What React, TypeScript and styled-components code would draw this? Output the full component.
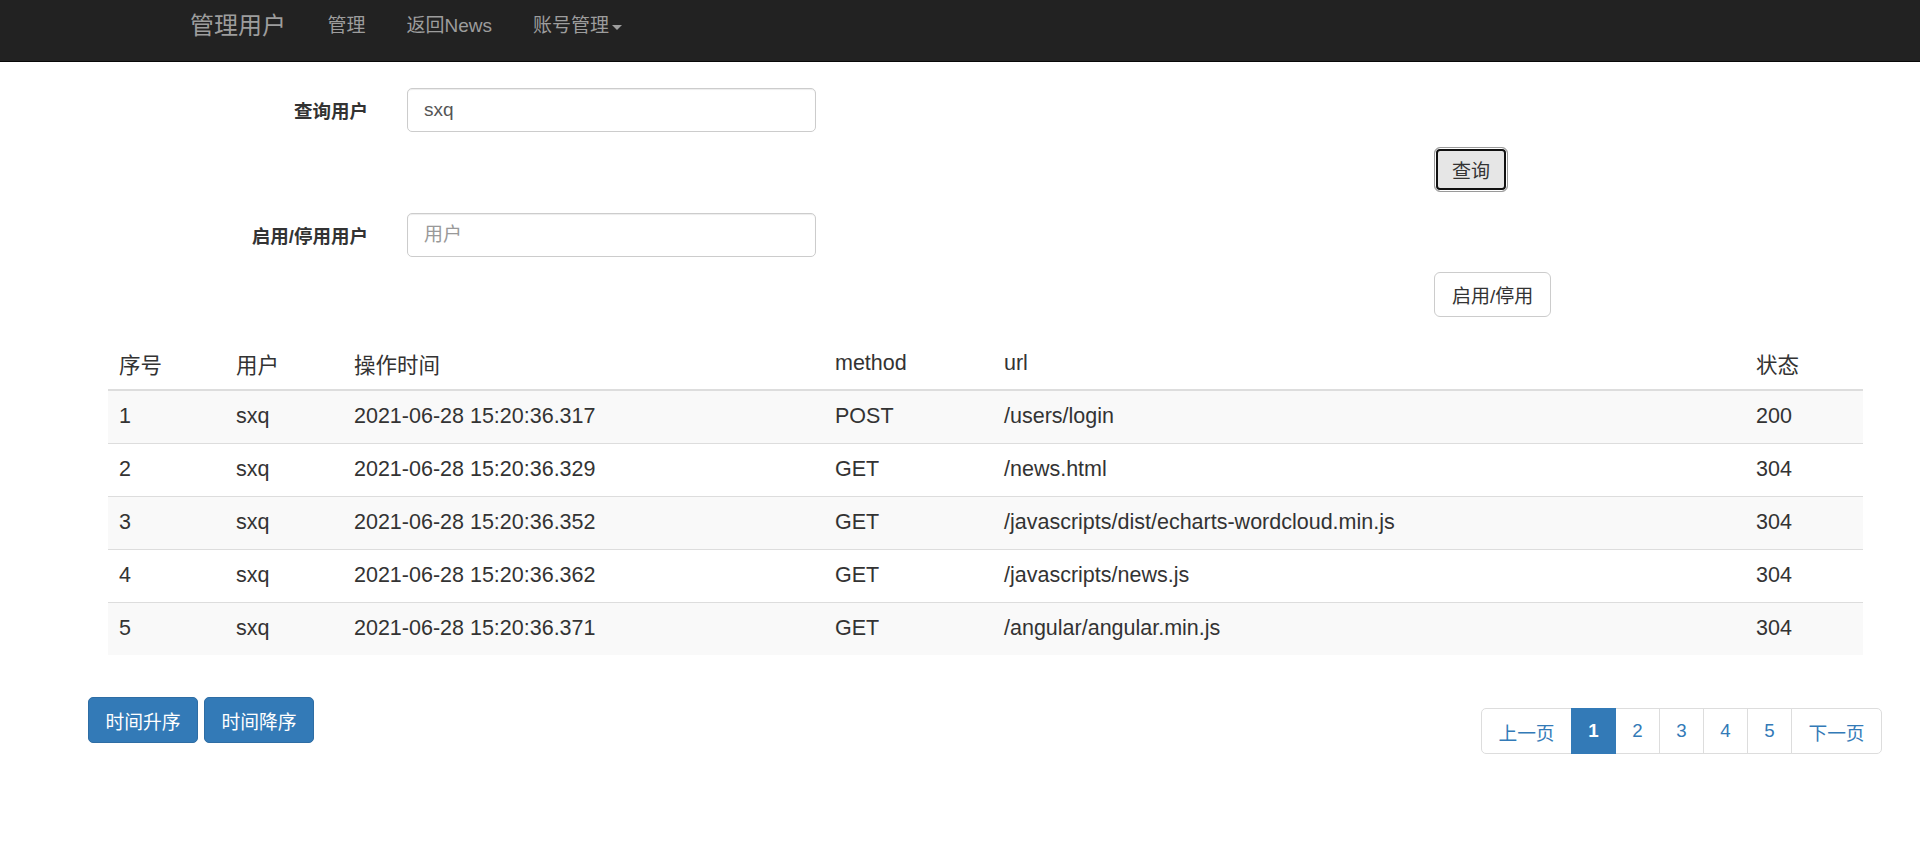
import { ReactElement } from 'react'
import styled, { createGlobalStyle } from 'styled-components'

type LogRow = {
  id: number
  user: string
  time: string
  method: string
  url: string
  status: number
}

const logs: LogRow[] = [
  { id: 1, user: 'sxq', time: '2021-06-28 15:20:36.317', method: 'POST', url: '/users/login', status: 200 },
  { id: 2, user: 'sxq', time: '2021-06-28 15:20:36.329', method: 'GET', url: '/news.html', status: 304 },
  { id: 3, user: 'sxq', time: '2021-06-28 15:20:36.352', method: 'GET', url: '/javascripts/dist/echarts-wordcloud.min.js', status: 304 },
  { id: 4, user: 'sxq', time: '2021-06-28 15:20:36.362', method: 'GET', url: '/javascripts/news.js', status: 304 },
  { id: 5, user: 'sxq', time: '2021-06-28 15:20:36.371', method: 'GET', url: '/angular/angular.min.js', status: 304 },
]

const columnWidths = [117, 118, 481, 169, 752, 118]
const headers = ['序号', '用户', '操作时间', 'method', 'url', '状态']
const pages = ['1', '2', '3', '4', '5']

function App(): ReactElement {
  return (
    <>
      <GlobalStyle />
      <Navbar>
        <Brand>管理用户</Brand>
        <NavLink>管理</NavLink>
        <NavLink>返回News</NavLink>
        <NavLink>
          账号管理
          <Caret />
        </NavLink>
      </Navbar>

      <FormSection>
        <FormRow>
          <Label>查询用户</Label>
          <TextInput defaultValue="sxq" />
        </FormRow>
        <ButtonRow>
          <DefaultButton $focused>查询</DefaultButton>
        </ButtonRow>
        <FormRow>
          <Label>启用/停用用户</Label>
          <TextInput placeholder="用户" />
        </FormRow>
        <ButtonRow>
          <DefaultButton>启用/停用</DefaultButton>
        </ButtonRow>
      </FormSection>

      <TableWrap>
        <Table>
          <colgroup>
            {columnWidths.map((w, i) => (
              <col key={i} style={{ width: w }} />
            ))}
          </colgroup>
          <thead>
            <tr>
              {headers.map((h) => (
                <Th key={h}>{h}</Th>
              ))}
            </tr>
          </thead>
          <tbody>
            {logs.map((row) => (
              <Tr key={row.id} $striped={row.id % 2 === 1}>
                <Td>{row.id}</Td>
                <Td>{row.user}</Td>
                <Td>{row.time}</Td>
                <Td>{row.method}</Td>
                <Td>{row.url}</Td>
                <Td>{row.status}</Td>
              </Tr>
            ))}
          </tbody>
        </Table>
      </TableWrap>

      <Footer>
        <SortButtons>
          <PrimaryButton>时间升序</PrimaryButton>
          <PrimaryButton>时间降序</PrimaryButton>
        </SortButtons>
        <Pagination>
          <PageItem>上一页</PageItem>
          {pages.map((p) => (
            <PageItem key={p} $active={p === '1'} $number>
              {p}
            </PageItem>
          ))}
          <PageItem>下一页</PageItem>
        </Pagination>
      </Footer>
    </>
  )
}

export default App

const GlobalStyle = createGlobalStyle`
  html, body {
    margin: 0;
    padding: 0;
    background: #fff;
  }
  body {
    font-family: "Liberation Sans", Arial, "Noto Sans CJK SC", sans-serif;
    color: #333;
  }
  * {
    box-sizing: border-box;
  }
`

const Navbar = styled.nav`
  display: flex;
  align-items: flex-start;
  height: 62px;
  padding-left: 170px;
  background: #222;
  border-bottom: 1px solid #080808;
`

const Brand = styled.a`
  padding: 14px 21px 0 20px;
  font-size: 24px;
  line-height: 24px;
  color: #9d9d9d;
  cursor: pointer;
`

const NavLink = styled.a`
  display: flex;
  align-items: center;
  padding: 15px 20.5px 0;
  font-size: 19px;
  line-height: 22px;
  color: #9d9d9d;
  cursor: pointer;
`

const Caret = styled.span`
  display: inline-block;
  width: 0;
  height: 0;
  margin-left: 3px;
  margin-top: 2px;
  border-top: 5px solid #9d9d9d;
  border-left: 5px solid transparent;
  border-right: 5px solid transparent;
`

const FormSection = styled.form`
  display: flex;
  flex-direction: column;
  padding-top: 26px;
`

const FormRow = styled.div`
  display: grid;
  grid-template-columns: 368px 409px;
  column-gap: 39px;
  align-items: center;
`

const Label = styled.label`
  text-align: right;
  font-size: 18.5px;
  font-weight: 700;
  color: #333;
`

const TextInput = styled.input`
  width: 409px;
  height: 44px;
  padding: 0 16px;
  border: 1px solid #ccc;
  border-radius: 5px;
  box-shadow: inset 0 1px 1px rgba(0, 0, 0, 0.075);
  font-family: inherit;
  font-size: 19px;
  color: #555;
  outline: none;

  &::placeholder {
    color: #999;
  }
`

const ButtonRow = styled.div`
  display: flex;
  padding-left: 1434px;
  margin-top: 15px;
  margin-bottom: 21px;
`

const DefaultButton = styled.button<{ $focused?: boolean }>`
  height: 45px;
  padding: 0 17px;
  border: 1px solid ${(p) => (p.$focused ? '#9a9a9a' : '#ccc')};
  border-radius: 6px;
  background: ${(p) => (p.$focused ? '#e6e6e6' : '#fff')};
  box-shadow: ${(p) => (p.$focused ? 'inset 0 0 0 1px #fff, inset 0 0 0 3px #111' : 'none')};
  font-family: inherit;
  font-size: 19px;
  color: #333;
  cursor: pointer;
`

const TableWrap = styled.div`
  padding-left: 108px;
  margin-top: -1px;
`

const Table = styled.table`
  width: 1755px;
  table-layout: fixed;
  border-collapse: collapse;
  font-size: 21.5px;
`

const Th = styled.th`
  height: 53px;
  padding: 0 11px;
  border-bottom: 2px solid #ddd;
  text-align: left;
  font-weight: 400;
  vertical-align: middle;
`

const Tr = styled.tr<{ $striped: boolean }>`
  background: ${(p) => (p.$striped ? '#f9f9f9' : '#fff')};
`

const Td = styled.td`
  height: 53px;
  padding: 0 11px;
  border-top: 1px solid #ddd;
  vertical-align: middle;
  white-space: nowrap;
`

const Footer = styled.div`
  display: flex;
  justify-content: space-between;
  align-items: flex-start;
  padding: 42px 38px 0 88px;
`

const SortButtons = styled.div`
  display: flex;
  gap: 6px;
`

const PrimaryButton = styled.button`
  width: 110px;
  height: 46px;
  padding: 0;
  border: 1px solid #2e6da4;
  border-radius: 5px;
  background: #337ab7;
  font-family: inherit;
  font-size: 18.8px;
  color: #fff;
  cursor: pointer;
`

const Pagination = styled.ul`
  display: flex;
  margin: 11px 0 0;
  padding: 0;
  list-style: none;
`

const PageItem = styled.li<{ $active?: boolean; $number?: boolean }>`
  display: flex;
  align-items: center;
  justify-content: center;
  height: 46px;
  min-width: ${(p) => (p.$number ? '45px' : '91px')};
  padding: 0 16px;
  margin-left: -1px;
  border: 1px solid ${(p) => (p.$active ? '#337ab7' : '#ddd')};
  background: ${(p) => (p.$active ? '#337ab7' : '#fff')};
  color: ${(p) => (p.$active ? '#fff' : '#337ab7')};
  font-size: 18.7px;
  font-weight: ${(p) => (p.$active ? 700 : 400)};
  cursor: pointer;
  position: ${(p) => (p.$active ? 'relative' : 'static')};
  z-index: ${(p) => (p.$active ? 1 : 0)};

  &:first-child {
    margin-left: 0;
    border-radius: 5px 0 0 5px;
  }
  &:last-child {
    border-radius: 0 5px 5px 0;
  }
`
